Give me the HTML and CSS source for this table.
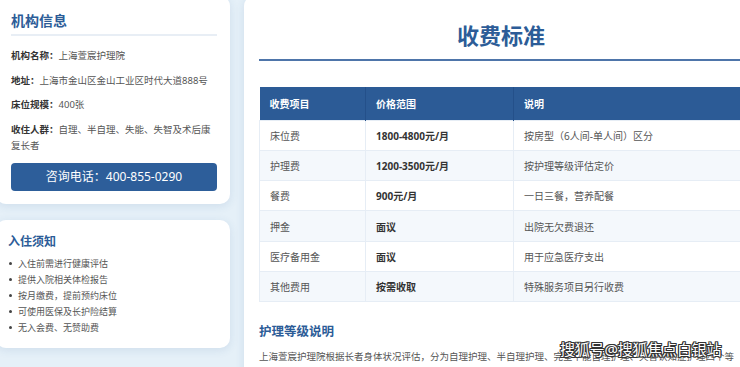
FILE: index.html
```html
<!DOCTYPE html>
<html lang="zh-CN">
<head>
    <meta charset="UTF-8">
    <meta name="viewport" content="width=device-width, initial-scale=1.0">
    <title>上海萱宸护理院 收费标准</title>
    <link rel="stylesheet" href="styles.css">
</head>
<body>
    <div class="page">
        <aside class="sidebar">
            <div class="card info">
                <h3 class="card-title">机构信息</h3>
                <p class="row"><b>机构名称：</b>上海萱宸护理院</p>
                <p class="row"><b>地址：</b>上海市金山区金山工业区时代大道888号</p>
                <p class="row"><b>床位规模：</b>400张</p>
                <p class="row"><b>收住人群：</b>自理、半自理、失能、失智及术后康复长者</p>
                <div class="call">咨询电话：400-855-0290</div>
            </div>
            <div class="card notice">
                <h3 class="notice-title">入住须知</h3>
                <ul class="notice-list">
                    <li>入住前需进行健康评估</li>
                    <li>提供入院相关体检报告</li>
                    <li>按月缴费，提前预约床位</li>
                    <li>可使用医保及长护险结算</li>
                    <li>无入会费、无赞助费</li>
                </ul>
            </div>
        </aside>

        <main class="card main">
            <h1 class="main-title">收费标准</h1>
            <table class="fees">
                <thead>
                    <tr>
                        <th class="c1">收费项目</th>
                        <th class="c2">价格范围</th>
                        <th>说明</th>
                    </tr>
                </thead>
                <tbody>
                    <tr><td>床位费</td><td class="price">1800-4800元/月</td><td>按房型（6人间-单人间）区分</td></tr>
                    <tr><td>护理费</td><td class="price">1200-3500元/月</td><td>按护理等级评估定价</td></tr>
                    <tr><td>餐费</td><td class="price">900元/月</td><td>一日三餐，营养配餐</td></tr>
                    <tr><td>押金</td><td class="price">面议</td><td>出院无欠费退还</td></tr>
                    <tr><td>医疗备用金</td><td class="price">面议</td><td>用于应急医疗支出</td></tr>
                    <tr><td>其他费用</td><td class="price">按需收取</td><td>特殊服务项目另行收费</td></tr>
                </tbody>
            </table>

            <h2 class="sub-title">护理等级说明</h2>
            <p class="text">上海萱宸护理院根据长者身体状况评估，分为自理护理、半自理护理、完全不能自理护理、失智认知症护理四个等级，不同等级对应不同的护理费用标准。</p>
        </main>
    </div>

    <div class="watermark">搜狐号@搜狐焦点白银站</div>
</body>
</html>
```

FILE: styles.css
```css
* {
    margin: 0;
    padding: 0;
    box-sizing: border-box;
    font-family: "Noto Sans", "Noto Sans CJK SC", sans-serif;
}

body {
    background: #e5f0f8;
    overflow: hidden;
    color: #555;
}

.page {
    display: flex;
    align-items: flex-start;
    gap: 14px;
    margin: -4px 0 0 -4px;
    width: 780px;
}

.card {
    background: #fff;
    border-radius: 10px;
    box-shadow: 0 2px 10px rgba(40, 90, 150, 0.12);
}

/* sidebar */
.sidebar {
    width: 234px;
    flex-shrink: 0;
    display: flex;
    flex-direction: column;
    gap: 16px;
}

.info {
    padding: 14px 13px 13px 15px;
}

.card-title {
    font-size: 14px;
    line-height: 22px;
    font-weight: 700;
    color: #2c5c97;
    padding-bottom: 2px;
    border-bottom: 2px solid #e8eef5;
    margin-bottom: 12px;
}

.row {
    font-size: 9.5px;
    line-height: 16.5px;
    margin-bottom: 8px;
    color: #555;
}

.row b {
    color: #333;
    font-weight: 700;
}

.call {
    margin-top: 8px;
    height: 28px;
    line-height: 28px;
    background: #2d5e9a;
    color: #fff;
    font-size: 12px;
    text-align: center;
    border-radius: 4px;
}

.notice {
    padding: 13px 12px 12px 12px;
}

.notice-title {
    font-size: 12px;
    line-height: 18px;
    font-weight: 700;
    color: #2c5c97;
    margin-bottom: 5px;
}

.notice-list {
    list-style: none;
}

.notice-list li {
    display: flex;
    align-items: center;
    font-size: 9px;
    line-height: 16px;
    color: #555;
}

.notice-list li::before {
    content: "";
    width: 3px;
    height: 3px;
    border-radius: 50%;
    background: #444;
    margin: 0 6px 0 1px;
    flex-shrink: 0;
}

/* main card */
.main {
    width: 514px;
    flex-shrink: 0;
    padding: 24px 15px 20px;
    min-height: 420px;
}

.main-title {
    text-align: center;
    font-size: 22px;
    line-height: 30px;
    font-weight: 700;
    color: #2c5c97;
    padding-bottom: 9px;
    border-bottom: 2px solid #4e75aa;
    margin-bottom: 26px;
}

.fees {
    width: 100%;
    border-collapse: collapse;
    font-size: 10px;
}

.fees th {
    background: #2c5b96;
    color: #fff;
    font-weight: 700;
    text-align: left;
    height: 33px;
    padding: 0 10px;
    border-right: 1px solid #24508a;
}

.fees th:last-child {
    border-right: 0;
}

.fees .c1 {
    width: 106px;
}

.fees .c2 {
    width: 148px;
}

.fees td {
    height: 30.3px;
    padding: 0 10px;
    border: 1px solid #e6edf5;
    color: #555;
}

.fees tbody tr:nth-child(even) td {
    background: #f4f8fc;
}

.fees td.price {
    color: #333;
    font-weight: 700;
}

.sub-title {
    margin-top: 21px;
    font-size: 12.5px;
    line-height: 18px;
    font-weight: 700;
    color: #2c5c97;
}

.text {
    margin-top: 7px;
    font-size: 9.5px;
    line-height: 17px;
    color: #555;
}

/* overlay watermark */
.watermark {
    position: absolute;
    left: 560px;
    top: 339px;
    font-size: 15px;
    line-height: 20px;
    color: #fff;
    letter-spacing: -0.2px;
    text-shadow: 1px 0 0 #333, -1px 0 0 #333, 0 1px 0 #333, 0 -1px 0 #333,
        1px 1px 0 #333, -1px -1px 0 #333, 1px -1px 0 #333, -1px 1px 0 #333;
}
```
